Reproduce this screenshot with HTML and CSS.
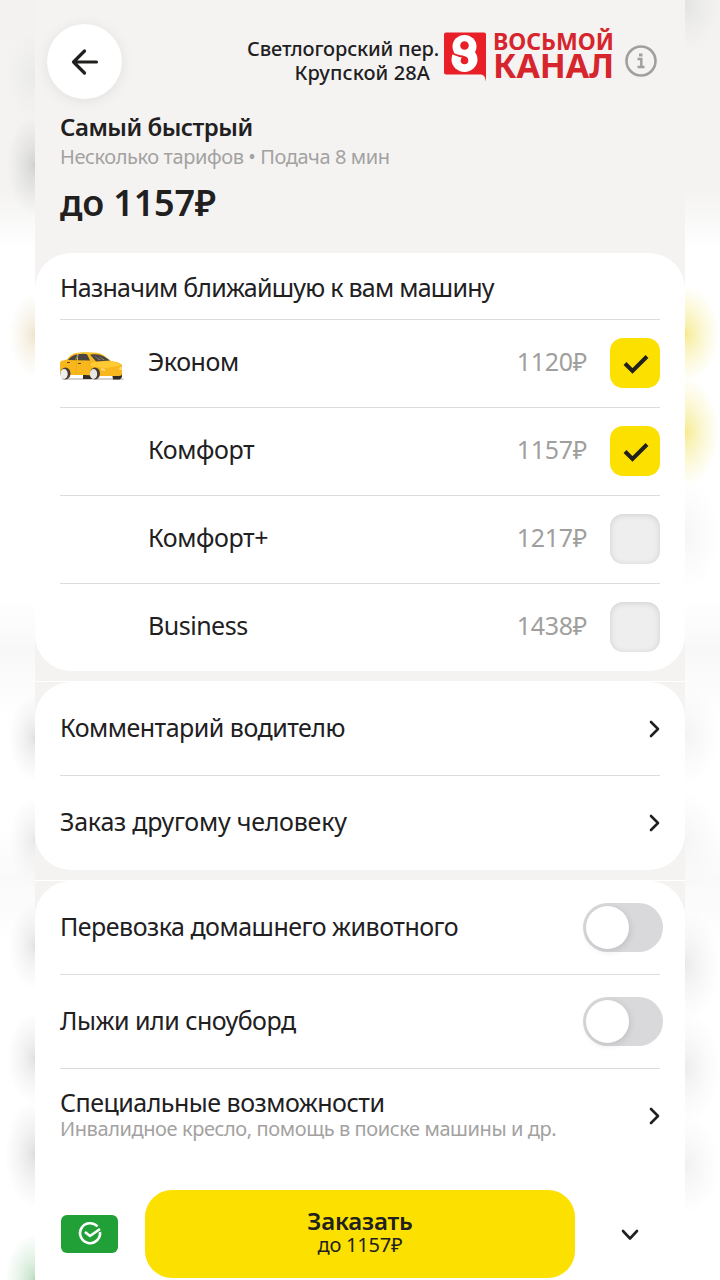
FILE: index.html
```html
<!DOCTYPE html>
<html lang="ru">
<head>
    <meta charset="UTF-8">
    <title>Заказ такси</title>
    <link rel="stylesheet" href="styles.css">
</head>
<body>

<div class="screen">
    <div class="header">
        <button class="back" type="button">
            <svg width="28" height="28" viewBox="0 0 28 28">
                <path d="M25.500 14H2.500M13.500 3l-11 11 11 11" />
            </svg>
        </button>
        <div class="address">
            <div class="address-street">Светлогорский пер.</div>
            <div class="address-house">Крупской 28А</div>
        </div>
        <svg class="logo" width="172" height="56" viewBox="0 0 172 56">
            <path fill="#e81f27" d="M2 4.500h38q2 0 2 2V53.500q-1-7-5-7H2q-2 0-2-2V6.500q0-2 2-2z" />
            <ellipse cx="20.500" cy="18.500" rx="12" ry="11.500" fill="#fff" />
            <ellipse cx="20.500" cy="31.500" rx="13" ry="12.500" fill="#fff" />
            <circle cx="20.500" cy="17.500" r="4.300" fill="#e81f27" />
            <circle cx="20.500" cy="32.500" r="3.800" fill="#e81f27" />
            <path d="M7.500 24.500q3 2.500 8 3.500 6 1 7.500 3" fill="none" stroke="#e81f27" stroke-width="1.800" />
            <path d="M34 23l-2 2 2 2z" fill="#e81f27" />
            <text class="logo-text" x="49" y="21.500" font-size="23" textLength="121" lengthAdjust="spacingAndGlyphs">ВОСЬМОЙ</text>
            <text class="logo-text" x="49" y="50" font-size="34" textLength="121" lengthAdjust="spacingAndGlyphs">КАНАЛ</text>
        </svg>
        <svg class="info" width="32" height="32" viewBox="0 0 32 32">
            <circle cx="16" cy="16" r="14.500" />
            <path d="M12.500 14h3.800v8M12.500 22h7" />
            <rect x="14" y="8.500" width="3.500" height="3" />
        </svg>
    </div>

    <div class="summary">
        <h1>Самый быстрый</h1>
        <p class="summary-note">Несколько тарифов • Подача 8 мин</p>
        <p class="summary-price">до 1157₽</p>
    </div>

    <div class="card tariffs">
        <h2>Назначим ближайшую к вам машину</h2>
        <div class="tariff">
            <svg class="car" width="66" height="32" viewBox="0 0 66 32">
                <path fill="#a9a5a2" d="M3 27.500h61l1 1H3z" />
                <path fill="#332a25" d="M24 23h9v5h-9zM53 22h10v4l-2 2.500h-7z" />
                <path fill="#f8b71c" d="M1 12Q1 10 4 9.500l4-1Q12 3 16 2.200Q25 .5 33 1.500q8 0 12 3l7 5.500q9 1 11 4v8.500q0 2.500-3 2.500H42l-16-1H10L1 24z" />
                <path fill="#ffcb32" d="M31 15q0-4 6-4.500l14-.5q9 1 11 4.500L47 17l-11-1zM16 3q11-2.500 18-.5l-4 1z" />
                <path fill="#49443f" d="M9 9q4-5 9-5.500v5.800zM19 3.300q6-1 9 0l3 6.200-12-.3zM31 3.500q9-1 14 2l6 4-14 1z" />
                <path fill="#8d8880" d="M18 4l2 0-3 5h-1zM34 4l8 5h-2zM38 4l8 5h-2z" />
                <path stroke="#eda61b" stroke-width=".6" fill="none" d="M18 10l-1 13M30 11l1 5" />
                <path fill="#65441b" d="M8 11h3v1H8zM19 12h3v1h-3z" />
                <ellipse cx="6.500" cy="22.500" rx="5" ry="6" fill="#4a3b2c" />
                <ellipse cx="5" cy="23" rx="3.700" ry="5" fill="#f0efee" />
                <ellipse cx="36" cy="22.500" rx="5" ry="6" fill="#4a3b2c" />
                <ellipse cx="34.500" cy="23" rx="3.700" ry="5" fill="#e7e6e7" />
                <path fill="#ffdd76" d="M61 16h2v3h-3zM42 17l4 1v2l-4-1z" />
            </svg>
            <span class="tariff-name">Эконом</span>
            <span class="tariff-price">1120₽</span>
            <span class="checkbox checked">
                <svg width="28" height="22" viewBox="0 0 28 22"><path d="M3 10.500l7.500 7.500L25 3.500" /></svg>
            </span>
        </div>
        <div class="tariff">
            <span class="tariff-name">Комфорт</span>
            <span class="tariff-price">1157₽</span>
            <span class="checkbox checked">
                <svg width="28" height="22" viewBox="0 0 28 22"><path d="M3 10.500l7.500 7.500L25 3.500" /></svg>
            </span>
        </div>
        <div class="tariff">
            <span class="tariff-name">Комфорт+</span>
            <span class="tariff-price">1217₽</span>
            <span class="checkbox"></span>
        </div>
        <div class="tariff">
            <span class="tariff-name business">Business</span>
            <span class="tariff-price">1438₽</span>
            <span class="checkbox"></span>
        </div>
    </div>

    <div class="group details">
        <div class="card">
            <div class="option">
                <span class="option-name">Комментарий водителю</span>
                <svg class="chevron" width="12" height="18" viewBox="0 0 12 18"><path d="M3 2l7 7-7 7" /></svg>
            </div>
            <div class="option">
                <span class="option-name other">Заказ другому человеку</span>
                <svg class="chevron" width="12" height="18" viewBox="0 0 12 18"><path d="M3 2l7 7-7 7" /></svg>
            </div>
        </div>
    </div>

    <div class="group extras">
        <div class="card">
            <div class="option">
                <span class="option-name">Перевозка домашнего животного</span>
                <span class="switch"></span>
            </div>
            <div class="option">
                <span class="option-name">Лыжи или сноуборд</span>
                <span class="switch"></span>
            </div>
            <div class="option">
                <div class="option-text">
                    <div class="option-name">Специальные возможности</div>
                    <div class="option-note">Инвалидное кресло, помощь в поиске машины и др.</div>
                </div>
                <svg class="chevron" width="12" height="18" viewBox="0 0 12 18"><path d="M3 2l7 7-7 7" /></svg>
            </div>
        </div>
    </div>

    <div class="footer">
        <div class="payment">
            <svg width="26" height="26" viewBox="0 0 26 26">
                <path d="M20.500 5.500A10 10 0 1 0 23 11M8 11l5 4L23 8" />
            </svg>
        </div>
        <button class="order" type="button">
            <span class="order-title">Заказать</span>
            <span class="order-price">до 1157₽</span>
        </button>
        <svg class="chevron" width="18" height="12" viewBox="0 0 18 12"><path d="M2 2l7 7.500L16 2" /></svg>
    </div>
</div>

</body>
</html>
```

FILE: styles.css
```css
body {
    margin: 0;
    height: 1280px;
    overflow: hidden;
    display: flex;
    justify-content: center;
    color: #21201f;
    font-family: "Noto Sans", "Open Sans", sans-serif;
    background:
        radial-gradient(ellipse 28px 50px at 35px 165px, #cbcbcb, 30%, transparent),
        radial-gradient(ellipse 28px 46px at 35px 75px, #e8e8e8, 30%, transparent),
        radial-gradient(ellipse 26px 42px at 35px 335px, #ecdfc4, 30%, transparent),
        radial-gradient(ellipse 26px 44px at 35px 738px, #dcdcdc, 30%, transparent),
        radial-gradient(ellipse 26px 44px at 35px 840px, #e4e4e4, 30%, transparent),
        radial-gradient(ellipse 26px 44px at 35px 945px, #dedede, 30%, transparent),
        radial-gradient(ellipse 28px 46px at 35px 1058px, #dcdcdc, 30%, transparent),
        radial-gradient(ellipse 30px 54px at 35px 1154px, #d8d8d8, 30%, transparent),
        radial-gradient(ellipse 30px 46px at 35px 1280px, #aed8b4, 30%, transparent),
        radial-gradient(ellipse 34px 48px at 685px 334px, #f5e983, 35%, transparent),
        radial-gradient(ellipse 34px 54px at 685px 432px, #f5e983, 35%, transparent),
        radial-gradient(ellipse 34px 44px at 685px 5px, #e0e0e0, 30%, transparent),
        radial-gradient(ellipse 35px 56px at 685px 535px, #f5f5f5, 40%, transparent),
        radial-gradient(ellipse 35px 50px at 685px 735px, #f2f2f2, 40%, transparent),
        radial-gradient(ellipse 35px 50px at 685px 840px, #f4f4f4, 40%, transparent),
        radial-gradient(ellipse 35px 56px at 685px 965px, #e8e8e8, 35%, transparent),
        radial-gradient(ellipse 35px 56px at 685px 1068px, #ebebed, 35%, transparent),
        radial-gradient(ellipse 35px 50px at 685px 1165px, #f0f0f0, 40%, transparent),
        linear-gradient(#f3f2f1 0, #f4f3f2 190px, #fff 250px, #fff 600px, #f9f8f8 650px, #fff 720px, #fff 830px, #faf9f9 880px, #fff 940px);
}

h1, h2, p {
    margin: 0;
}

button {
    border: none;
    padding: 0;
    font-family: inherit;
    color: inherit;
}

svg {
    display: block;
    flex: none;
}

.screen {
    width: 650px;
    height: 1280px;
    display: flex;
    flex-direction: column;
    background: #f4f3f2;
}

.header {
    display: flex;
    flex-shrink: 0;
    align-items: flex-start;
    height: 112px;
}

.back {
    display: flex;
    align-items: center;
    justify-content: center;
    width: 75px;
    height: 75px;
    margin: 24px 0 0 12px;
    border-radius: 50%;
    background: #fff;
    box-shadow: 0 2px 14px rgba(0, 0, 0, .08);
}

.back svg {
    fill: none;
    stroke: #21201f;
    stroke-width: 3.2;
    stroke-linecap: round;
    stroke-linejoin: round;
}

.address {
    display: flex;
    flex-direction: column;
    align-items: flex-end;
    width: 317px;
    margin-top: 37px;
    font-size: 20px;
    line-height: 24px;
    font-weight: 500;
    letter-spacing: -.15px;
    white-space: nowrap;
}

.address-house {
    margin-right: 9px;
    letter-spacing: .1px;
}

.logo {
    margin: 28px 0 0 5px;
    overflow: visible;
}

.logo-text {
    fill: #d7252d;
    font-weight: 700;
}

.info {
    margin: 45px 0 0 9px;
    fill: none;
    stroke: #a09f9e;
    stroke-width: 2.6;
}

.info path {
    stroke-width: 2.4;
}

.info rect {
    fill: #a09f9e;
    stroke: none;
}

.summary {
    flex-shrink: 0;
    height: 141px;
    padding: 0 25px;
    white-space: nowrap;
}

.summary h1 {
    font-size: 24px;
    line-height: 30px;
    font-weight: 600;
    letter-spacing: -.5px;
}

.summary-note {
    color: #a3a2a1;
    font-size: 20px;
    line-height: 30px;
    letter-spacing: -.42px;
}

.summary-price {
    margin-top: 6px;
    font-size: 36px;
    line-height: 50px;
    font-weight: 600;
    letter-spacing: -.2px;
}

.card {
    padding: 0 25px;
    border-radius: 36px;
    background: #fff;
}

.card h2 {
    height: 66px;
    font-size: 25px;
    line-height: 68px;
    font-weight: 400;
    letter-spacing: -.75px;
    white-space: nowrap;
}

.tariffs {
    flex-shrink: 0;
    height: 418px;
    margin-bottom: 10px;
}

.tariff {
    display: grid;
    grid-template-columns: 88px 1fr auto 73px;
    align-items: center;
    height: 86px;
    padding-bottom: 1px;
    border-top: 1px solid #dcdcdc;
}

.car {
    margin: 8px 0 0 -1px;
}

.tariff-name {
    grid-column: 2;
    font-size: 25px;
    line-height: 34px;
    letter-spacing: -.4px;
    padding-bottom: 5px;
}

.tariff-name.business {
    letter-spacing: -.5px;
}

.tariff-price {
    color: #a09f9e;
    font-size: 25px;
    line-height: 34px;
    letter-spacing: -.3px;
    padding-bottom: 5px;
}

.checkbox {
    display: flex;
    align-items: center;
    justify-content: center;
    justify-self: end;
    width: 50px;
    height: 50px;
    border-radius: 13px;
    background: #eeeeee;
    box-shadow: inset 0 1px 6px rgba(0, 0, 0, .13);
}

.checkbox.checked {
    background: #fce000;
    box-shadow: none;
}

.checkbox svg {
    margin: 2px 0 0 1px;
    fill: none;
    stroke: #21201f;
    stroke-width: 4;
}

.group {
    flex-shrink: 0;
    border-top: 1px solid #fff;
}

.details .card {
    margin-bottom: 10px;
    padding-bottom: 1px;
}

.extras .card {
    border-radius: 36px 36px 0 0;
}

.option {
    display: flex;
    align-items: center;
    justify-content: space-between;
    height: 93px;
    white-space: nowrap;
}

.option + .option {
    border-top: 1px solid #dcdcdc;
}

.option-name {
    font-size: 25px;
    line-height: 30px;
    letter-spacing: -.5px;
    padding-bottom: 4px;
}

.option-name.other {
    letter-spacing: -.24px;
}

.option-text {
    padding-bottom: 3px;
}

.option-text .option-name {
    padding-bottom: 0;
}

.option-note {
    color: #a3a2a1;
    font-size: 20px;
    line-height: 24px;
    letter-spacing: -.41px;
}

.chevron {
    fill: none;
    stroke: #21201f;
    stroke-width: 2.6;
    stroke-linecap: round;
    stroke-linejoin: round;
}

.switch {
    width: 72px;
    height: 43px;
    margin-right: -3px;
    padding: 3px 5px 3px 3px;
    border-radius: 25px;
    background: #d9d9dc;
}

.switch::before {
    content: "";
    display: block;
    width: 43px;
    height: 43px;
    border-radius: 50%;
    background: #fff;
    box-shadow: 1px 2px 7px rgba(0, 0, 0, .12);
}

.footer {
    flex: 1;
    display: flex;
    align-items: flex-start;
    padding-left: 26px;
    background: #fff;
}

.payment {
    display: flex;
    align-items: center;
    justify-content: center;
    width: 57px;
    height: 38px;
    margin-top: 53px;
    border-radius: 6px;
    background: #21a038;
}

.payment svg {
    fill: none;
    stroke: #fff;
    stroke-width: 2.6;
}

.order {
    display: flex;
    flex-direction: column;
    align-items: center;
    justify-content: center;
    box-sizing: border-box;
    width: 430px;
    height: 88px;
    margin: 28px 46px 0 27px;
    padding-bottom: 3px;
    border-radius: 27px;
    background: #fce000;
}

.order-title {
    font-size: 24px;
    line-height: 25px;
    font-weight: 600;
    letter-spacing: -.2px;
}

.order-price {
    font-size: 20px;
    line-height: 24px;
    letter-spacing: -.2px;
}

.footer .chevron {
    margin-top: 67px;
}
```
